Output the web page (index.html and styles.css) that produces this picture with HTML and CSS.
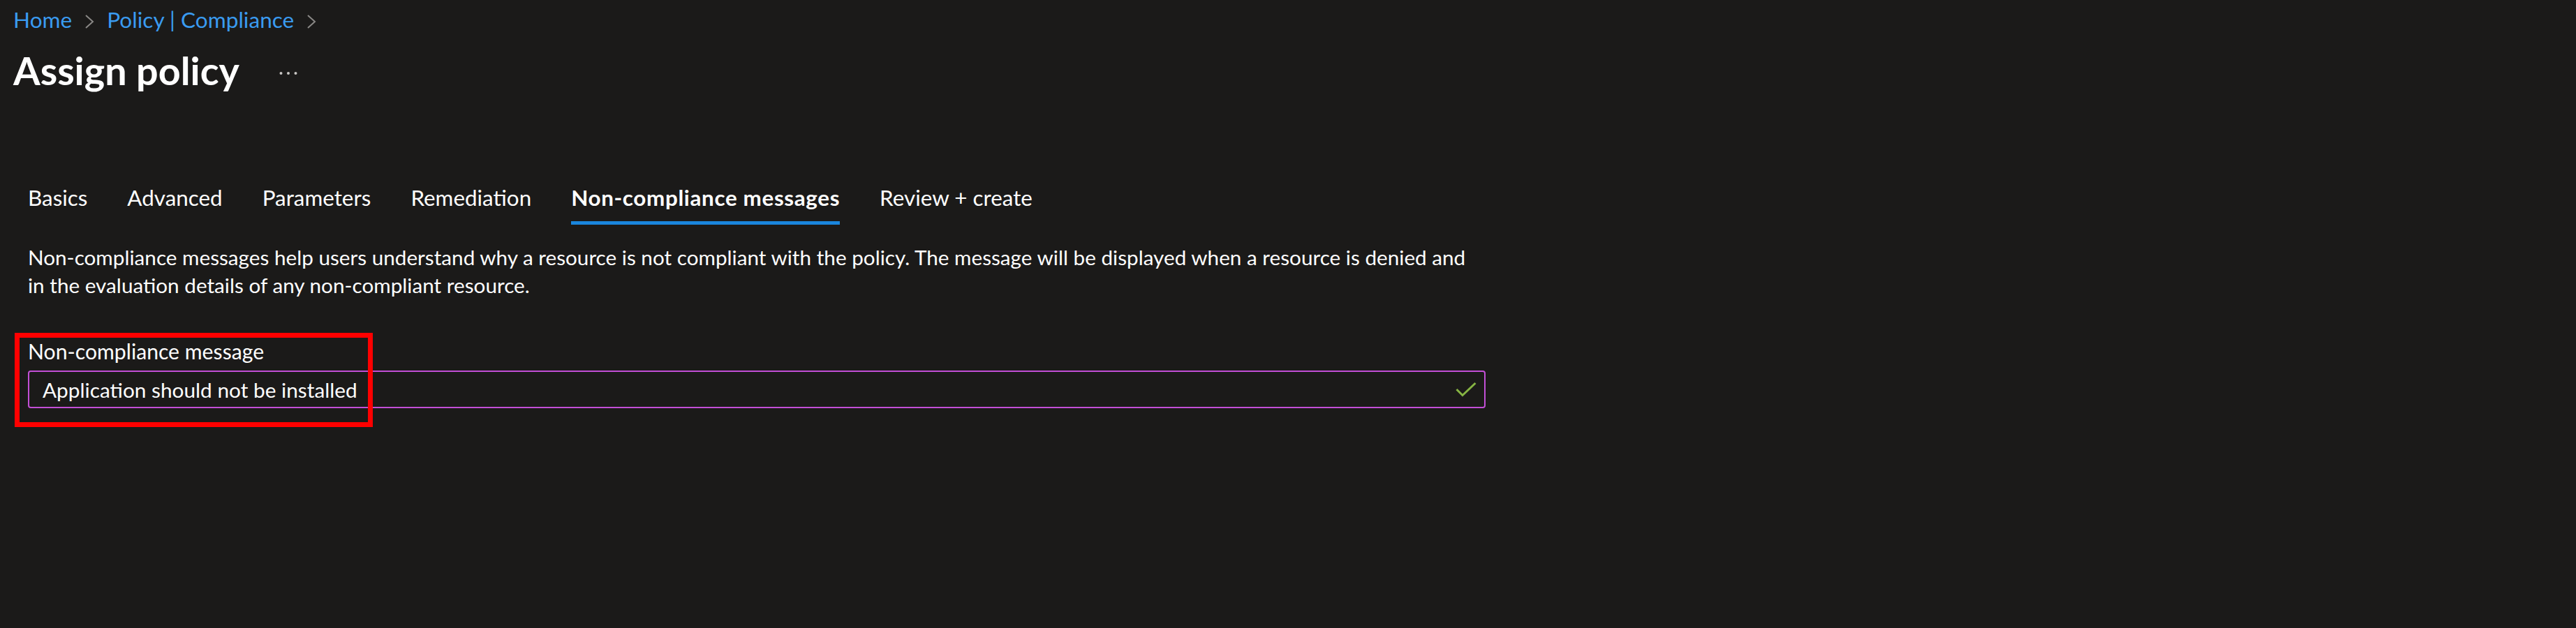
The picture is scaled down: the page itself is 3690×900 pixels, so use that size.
FILE: index.html
```html
<!DOCTYPE html>
<html lang="en">
<head>
<meta charset="utf-8">
<title>Assign policy</title>
<link rel="stylesheet" href="styles.css">
</head>
<body>
<div class="page">
  <nav class="breadcrumb">
    <a class="crumb" href="#">Home</a>
    <span class="chev"><svg width="14" height="22" viewBox="0 0 14 22"><polyline points="2,2 12,11 2,20" fill="none" stroke="#8a8886" stroke-width="2"/></svg></span>
    <a class="crumb" href="#">Policy | Compliance</a>
    <span class="chev"><svg width="14" height="22" viewBox="0 0 14 22"><polyline points="2,2 12,11 2,20" fill="none" stroke="#8a8886" stroke-width="2"/></svg></span>
  </nav>
  <header class="titlebar">
    <h1 class="title">Assign policy</h1>
    <span class="more"><svg width="26" height="6" viewBox="0 0 26 6"><circle cx="2.5" cy="3" r="2" fill="#c8c6c4"/><circle cx="13" cy="3" r="2" fill="#c8c6c4"/><circle cx="23.5" cy="3" r="2" fill="#c8c6c4"/></svg></span>
  </header>
  <main class="content">
    <div class="tabs">
      <span class="tab">Basics</span>
      <span class="tab">Advanced</span>
      <span class="tab">Parameters</span>
      <span class="tab">Remediation</span>
      <span class="tab active">Non-compliance messages</span>
      <span class="tab">Review + create</span>
    </div>
    <p class="desc">Non-compliance messages help users understand why a resource is not compliant with the policy. The message will be displayed when a resource is denied and in the evaluation details of any non-compliant resource.</p>
    <div class="field">
      <label class="label">Non-compliance message</label>
      <div class="input">
        <span class="value">Application should not be installed</span>
        <svg class="check" width="30" height="22" viewBox="0 0 30 22"><polyline points="1.5,11 10,19.5 28.5,2" fill="none" stroke="#86b443" stroke-width="3"/></svg>
      </div>
      <div class="highlight"></div>
    </div>
  </main>
</div>
</body>
</html>
```
FILE: styles.css
```css
html, body {
  margin: 0;
  padding: 0;
  background: #1b1a19;
}
body {
  font-family: "Segoe UI", Lato, "Open Sans", sans-serif;
  color: #ffffff;
  font-size: 30.6px;
  width: 3690px;
  height: 900px;
  overflow: hidden;
}
.page {
  padding: 10px 0 0 19px;
}
.breadcrumb {
  display: flex;
  align-items: center;
  height: 37px;
  line-height: 37px;
  gap: 18px;
  font-size: 31.6px;
}
.crumb {
  color: #3a9bf0;
  text-decoration: none;
}
.chev {
  display: flex;
  align-items: center;
  margin-top: 4px;
}
.titlebar {
  display: flex;
  align-items: center;
  margin-top: 20px;
  height: 68px;
}
.title {
  margin: 0;
  font-size: 55.7px;
  font-weight: 700;
  line-height: 68px;
}
.more {
  display: flex;
  margin-left: 57px;
  margin-top: 8px;
}
.content {
  padding-left: 21px;
  width: 2088px;
}
.tabs {
  display: flex;
  gap: 57px;
  margin-top: 130px;
  font-size: 31.4px;
}
.tab {
  line-height: 37px;
  padding-bottom: 15px;
  border-bottom: 5px solid transparent;
}
.tab.active {
  font-weight: 700;
  letter-spacing: 0.64px;
  border-bottom-color: #1a86dd;
}
.desc {
  margin: 27px 0 0 0;
  max-width: 2072px;
  font-size: 29.7px;
  line-height: 40px;
}
.field {
  position: relative;
  margin-top: 56px;
}
.label {
  display: block;
  font-size: 30.2px;
  line-height: 37px;
}
.input {
  margin-top: 9px;
  height: 54px;
  box-sizing: border-box;
  border: 2px solid #c24fd6;
  border-radius: 4px;
  display: flex;
  align-items: center;
  justify-content: space-between;
  padding: 0 11px 0 19px;
}
.value {
  font-size: 29.8px;
  line-height: 37px;
}
.highlight {
  position: absolute;
  left: -19px;
  top: -8px;
  width: 513px;
  height: 135px;
  box-sizing: border-box;
  border: 7px solid #ff0000;
}
```
